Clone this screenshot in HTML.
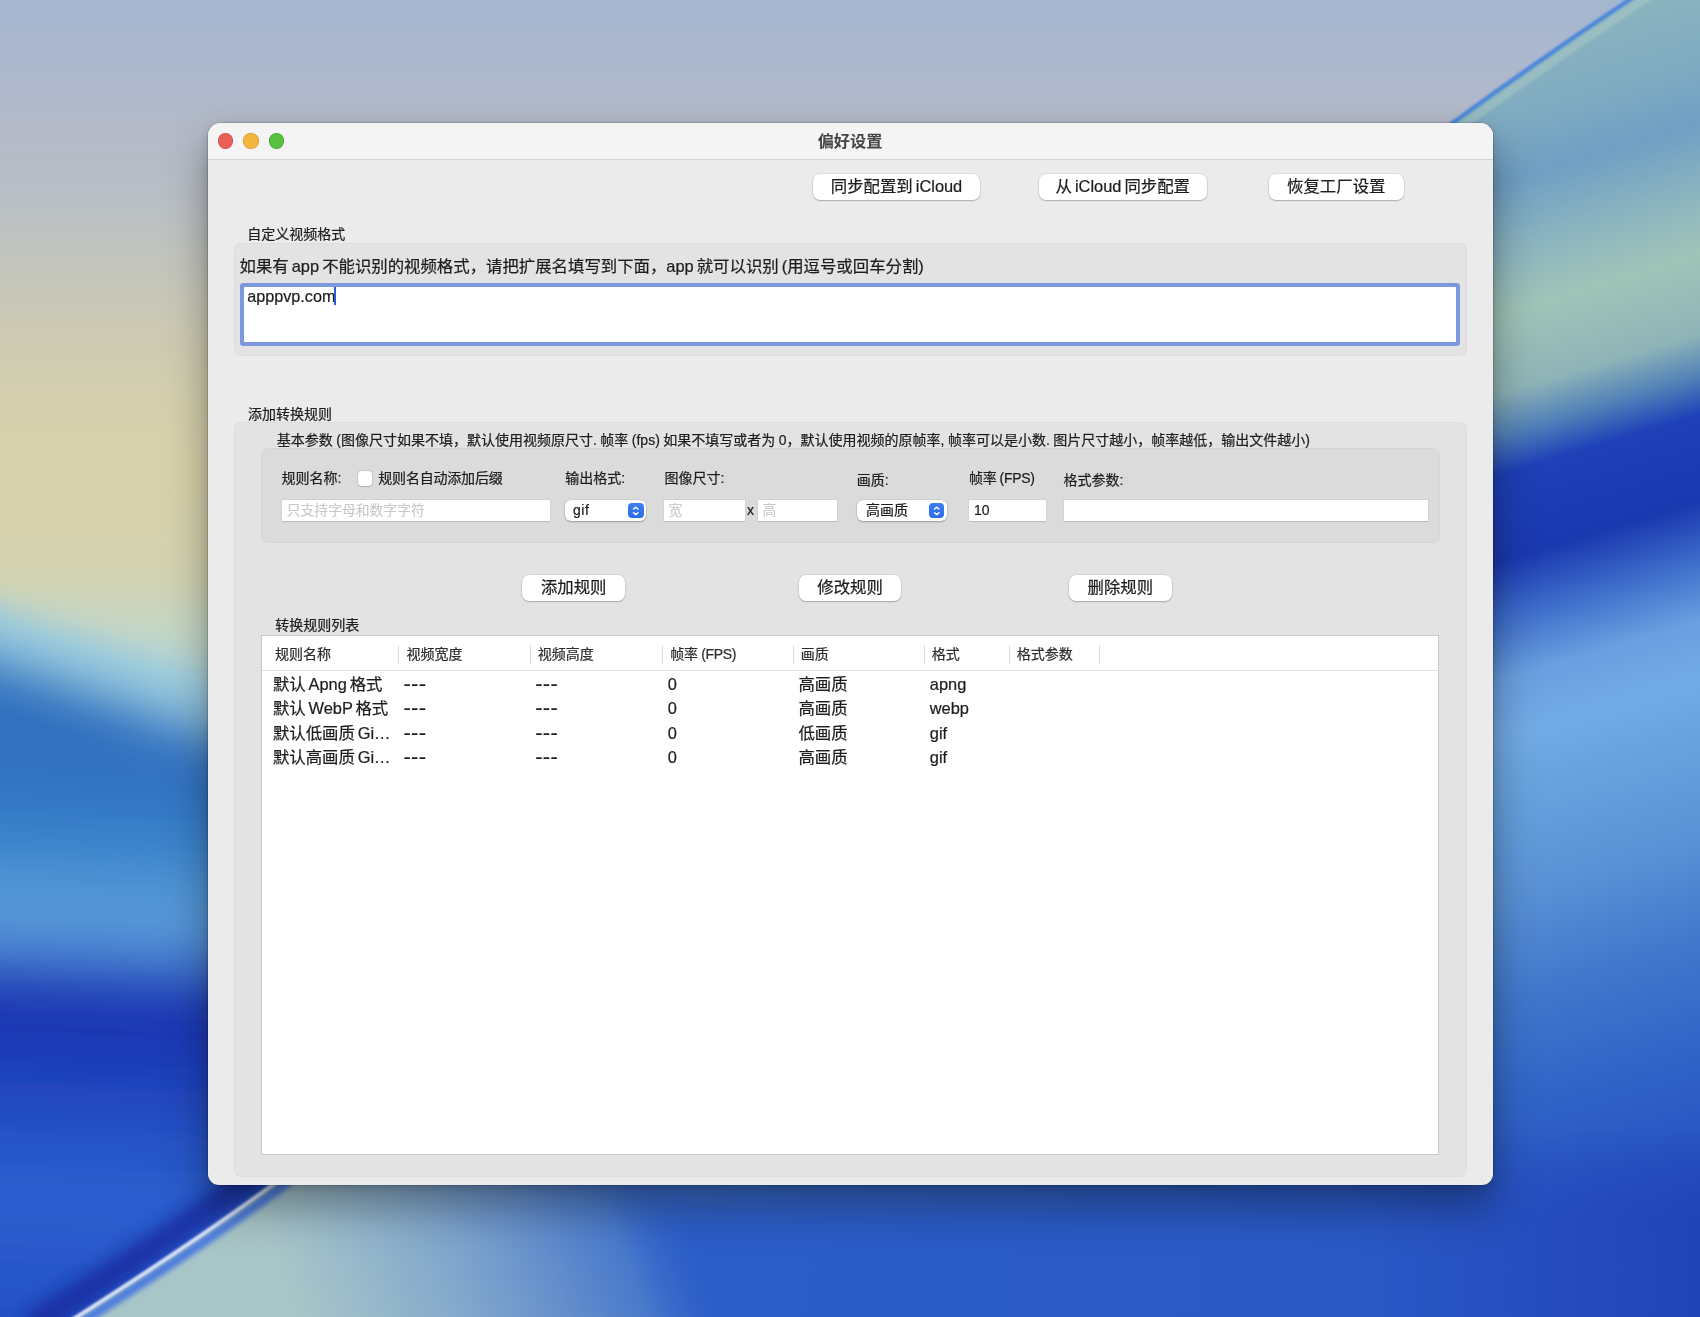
<!DOCTYPE html>
<html lang="zh-CN">
<head>
<meta charset="utf-8">
<title>偏好设置</title>
<style>
html,body{margin:0;padding:0;}
body{width:1700px;height:1317px;overflow:hidden;position:relative;background:#2a5bc8;
  font-family:"Liberation Sans","Noto Sans CJK SC",sans-serif;color:#1d1d1d;-webkit-text-stroke-width:.22px;}
#bg{position:absolute;left:0;top:0;width:1700px;height:1317px;display:block;}
.abs{position:absolute;}
#win{opacity:.9999;position:absolute;left:207.5px;top:123px;width:1285px;height:1062px;border-radius:12.5px 12.5px 11px 11px;background:#ebebeb;
  box-shadow:0 0 0 .6px rgba(0,0,0,.24), 0 22px 42px 2px rgba(0,0,0,.34), 0 3px 11px rgba(0,0,0,.15);overflow:hidden;}
#tbar{position:absolute;left:0;top:0;width:100%;height:36px;background:#f4f4f5;border-bottom:1px solid #d2d2d2;}
.tl{position:absolute;top:10.4px;width:15.6px;height:15.6px;border-radius:50%;box-shadow:inset 0 0 0 .7px rgba(0,0,0,.16);}
#title{position:absolute;left:0;right:0;top:0;height:36px;line-height:36.5px;text-align:center;font-weight:bold;font-size:16.2px;color:#454545;-webkit-text-stroke-width:0;}
.btn{position:absolute;height:26px;line-height:25.4px;word-spacing:-1.5px;background:#fff;border-radius:7px;text-align:center;font-size:16.4px;
  box-shadow:0 0 0 .5px rgba(0,0,0,.12), 0 1px 1.5px rgba(0,0,0,.22);white-space:nowrap;}
.lbl{position:absolute;font-size:14px;line-height:20px;white-space:nowrap;word-spacing:-.4px;}
.big{position:absolute;font-size:16.4px;line-height:24px;white-space:nowrap;word-spacing:-1.5px;}
.box{position:absolute;background:#e3e3e3;border-radius:7px;box-shadow:inset 0 0 0 1px rgba(0,0,0,.025);}
.box2{position:absolute;background:#dbdbdb;border-radius:7px;box-shadow:inset 0 0 0 1px rgba(0,0,0,.025);}
.tf{position:absolute;height:21.2px;background:#fff;box-shadow:0 1px 0 #b9b9b9, 0 0 0 .5px rgba(0,0,0,.08);font-size:14px;line-height:21px;white-space:nowrap;}
.ph{font-size:13.8px;position:relative;top:.5px;color:#c9c9c9;-webkit-text-stroke-width:.12px;}
.pop{position:absolute;height:21.4px;background:#fff;border-radius:6px;box-shadow:0 0 0 .5px rgba(0,0,0,.12), 0 1px 1.5px rgba(0,0,0,.25);font-size:14px;line-height:21.4px;white-space:nowrap;}
.step{position:absolute;right:2.3px;top:2.9px;width:15.5px;height:15.5px;border-radius:4px;background:linear-gradient(#3d80f3,#2a6ce6);}
.step svg{position:absolute;left:0;top:0;}
#tbl{position:absolute;left:54.6px;top:512.8px;width:1176.6px;height:518.4px;background:#fff;box-shadow:0 0 0 1px #c9c9c9;}
.th{position:absolute;top:8.1px;font-size:14px;line-height:20px;color:#2e2e2e;white-space:nowrap;}
.sep{position:absolute;top:9px;width:1px;height:19px;background:#dcdcdc;}
.td{position:absolute;font-size:16.4px;line-height:24px;white-space:nowrap;word-spacing:-1.7px;margin-top:-.8px;}
.ds{font-size:22px;letter-spacing:.3px;margin-left:-.8px;}
</style>
</head>
<body>
<svg id="bg" width="1700" height="1317" viewBox="0 0 1700 1317">
  <defs>
    <linearGradient id="sky" gradientUnits="userSpaceOnUse" x1="0" y1="0" x2="0" y2="1317">
      <stop offset="0" stop-color="#a5b6d0"/>
      <stop offset="0.0456" stop-color="#acb8ce"/>
      <stop offset="0.0987" stop-color="#b4bac8"/>
      <stop offset="0.152" stop-color="#b9bfc5"/>
      <stop offset="0.197" stop-color="#c2c4bd"/>
      <stop offset="0.25" stop-color="#cdcab4"/>
      <stop offset="0.304" stop-color="#d4cfad"/>
      <stop offset="0.357" stop-color="#d8d1aa"/>
      <stop offset="0.402" stop-color="#d6d2ad"/>
      <stop offset="0.44" stop-color="#d2d3b2"/>
      <stop offset="0.475" stop-color="#c6d6c4"/>
      <stop offset="0.52" stop-color="#b0d4d8"/>
    </linearGradient>
    <linearGradient id="lblue" gradientUnits="userSpaceOnUse" x1="0" y1="0" x2="-60" y2="1317">
      <stop offset="0.45" stop-color="#3a80c4"/>
      <stop offset="0.532" stop-color="#2f6fbe"/>
      <stop offset="0.592" stop-color="#3172c2"/>
      <stop offset="0.638" stop-color="#3a84cc"/>
      <stop offset="0.668" stop-color="#4f94d4"/>
      <stop offset="0.695" stop-color="#5c9cd9"/>
      <stop offset="0.718" stop-color="#4a84d4"/>
      <stop offset="0.74" stop-color="#2448bc"/>
      <stop offset="0.763" stop-color="#1a32b0"/>
      <stop offset="0.805" stop-color="#1d3eba"/>
      <stop offset="0.85" stop-color="#2450c4"/>
      <stop offset="0.896" stop-color="#2b5ecf"/>
      <stop offset="0.94" stop-color="#2a5acb"/>
      <stop offset="1" stop-color="#2450c4"/>
    </linearGradient>
    <linearGradient id="rgrad" gradientUnits="userSpaceOnUse" x1="1493" y1="0" x2="1855" y2="1209">
      <stop offset="0" stop-color="#90b8bc"/>
      <stop offset="0.06" stop-color="#86b0c0"/>
      <stop offset="0.099" stop-color="#7eaac2"/>
      <stop offset="0.14" stop-color="#6f9fc4"/>
      <stop offset="0.19" stop-color="#8ab3c0"/>
      <stop offset="0.24" stop-color="#a0c4b8"/>
      <stop offset="0.30" stop-color="#8fb4b8"/>
      <stop offset="0.333" stop-color="#5080b8"/>
      <stop offset="0.362" stop-color="#1e40b8"/>
      <stop offset="0.428" stop-color="#1a38b0"/>
      <stop offset="0.468" stop-color="#3a68c8"/>
      <stop offset="0.518" stop-color="#6a9fe0"/>
      <stop offset="0.562" stop-color="#72abe6"/>
      <stop offset="0.607" stop-color="#68a2de"/>
      <stop offset="0.683" stop-color="#5a92d6"/>
      <stop offset="0.76" stop-color="#4278cc"/>
      <stop offset="0.835" stop-color="#3266c8"/>
      <stop offset="0.9" stop-color="#2a58c4"/>
      <stop offset="1" stop-color="#2040b8"/>
    </linearGradient>
    <linearGradient id="teal" gradientUnits="userSpaceOnUse" x1="300" y1="1317" x2="680" y2="1170">
      <stop offset="0" stop-color="#a8c5c8"/>
      <stop offset="0.2" stop-color="#95b7cb"/>
      <stop offset="0.4" stop-color="#80a6cc"/>
      <stop offset="0.6" stop-color="#6690cc"/>
      <stop offset="0.8" stop-color="#4a7acb" stop-opacity="0.95"/>
      <stop offset="1" stop-color="#2c5ec9" stop-opacity="0"/>
    </linearGradient>
    <linearGradient id="bgrad" gradientUnits="userSpaceOnUse" x1="300" y1="0" x2="1700" y2="0">
      <stop offset="0" stop-color="#2c5ec9"/>
      <stop offset="0.75" stop-color="#2a59c6"/>
      <stop offset="0.9" stop-color="#254cbe"/>
      <stop offset="1" stop-color="#2044b8"/>
    </linearGradient>
    <linearGradient id="bmaskg" gradientUnits="userSpaceOnUse" x1="0" y1="1130" x2="0" y2="1230">
      <stop offset="0" stop-color="#000"/>
      <stop offset="1" stop-color="#fff"/>
    </linearGradient>
    <mask id="bmask" maskUnits="userSpaceOnUse" x="300" y="1120" width="1500" height="300"><rect x="300" y="1120" width="1500" height="300" fill="url(#bmaskg)"/></mask>
    <filter id="b25" x="-20%" y="-20%" width="140%" height="140%"><feGaussianBlur stdDeviation="25"/></filter>
    <filter id="b16" x="-20%" y="-20%" width="140%" height="140%"><feGaussianBlur stdDeviation="16"/></filter>
    <filter id="b6" x="-10%" y="-10%" width="120%" height="120%"><feGaussianBlur stdDeviation="5"/></filter>
    <filter id="b1" x="-5%" y="-5%" width="110%" height="110%"><feGaussianBlur stdDeviation="1"/></filter>
    <filter id="b9" x="-15%" y="-15%" width="130%" height="130%"><feGaussianBlur stdDeviation="8"/></filter>
    <filter id="b3" x="-10%" y="-10%" width="120%" height="120%"><feGaussianBlur stdDeviation="2.5"/></filter>
    <filter id="b2" x="-5%" y="-5%" width="110%" height="110%"><feGaussianBlur stdDeviation="1.2"/></filter>
  </defs>
  <rect width="1700" height="1317" fill="url(#sky)"/>
  <g filter="url(#b16)"><polygon points="-150,556 350,731 350,1450 -150,1450" fill="#9acbdf"/></g>
  <g filter="url(#b25)"><polygon points="-150,610 350,785 350,1450 -150,1450" fill="url(#lblue)"/></g>
  <path d="M1660,-20.5 Q1554.5,48.5 1453,122.5 L1200,330 L330,1140 L275,1183 C200,1238 120,1290 40,1340 L40,1400 L1800,1400 L1800,-18 Z" fill="url(#rgrad)"/>
  <rect x="300" y="1120" width="1500" height="300" fill="url(#bgrad)" mask="url(#bmask)"/>
  <path d="M1660,-20.5 Q1554.5,48.5 1453,122.5 L1380,183" fill="none" stroke="#a8c8c4" stroke-width="9" opacity=".55" transform="translate(5,6)" filter="url(#b2)"/>
  <path d="M1660,-20.5 Q1554.5,48.5 1453,122.5 L1380,183" fill="none" stroke="#4a86dc" stroke-width="4" filter="url(#b2)"/>
  <path d="M40,1340 C120,1290 200,1238 275,1183 L330,1140 L900,1140 L900,1400 L40,1400 Z" fill="url(#teal)"/>
  <path d="M40,1340 C120,1290 200,1238 275,1183 L330,1140" fill="none" stroke="#14289c" stroke-width="26" opacity=".78" filter="url(#b9)" transform="translate(-10,-14)"/>
  <path d="M40,1340 C120,1290 200,1238 275,1183 L330,1140" fill="none" stroke="#3f72e2" stroke-width="9" opacity=".85" filter="url(#b3)" transform="translate(4,6)"/>
  <path d="M40,1340 C120,1290 200,1238 275,1183 L330,1140" fill="none" stroke="#dde6f7" stroke-width="3.8" filter="url(#b1)"/>
</svg>
<div id="win">
  <div id="tbar">
    <div class="tl" style="left:10px;background:#ec5f57;"></div>
    <div class="tl" style="left:35.5px;background:#f5b63d;"></div>
    <div class="tl" style="left:61px;background:#56c13d;"></div>
    <div id="title">偏好设置</div>
  </div>
  <div id="in" style="position:absolute;left:-.5px;top:0;width:1286px;height:1062px;">

  <div class="btn" style="left:606px;top:51px;width:167px;">同步配置到 iCloud</div>
  <div class="btn" style="left:832px;top:51px;width:167.5px;">从 iCloud 同步配置</div>
  <div class="btn" style="left:1061.5px;top:51px;width:135.5px;">恢复工厂设置</div>

  <div class="lbl" style="left:40.2px;top:101px;">自定义视频格式</div>
  <div class="box" style="left:26.5px;top:120px;width:1233px;height:112.5px;"></div>
  <div class="big" style="left:32.5px;top:130.5px;">如果有 app 不能识别的视频格式，请把扩展名填写到下面，app 就可以识别 (用逗号或回车分割)</div>
  <div id="ta" class="abs" style="left:36.5px;top:163.5px;width:1212px;height:55.5px;background:#fff;box-shadow:0 0 0 4px #7c99dd;border-radius:1px;">
    <div class="abs" style="left:3.7px;top:-.8px;font-size:16.2px;line-height:20px;">apppvp.com</div>
    <div class="abs" style="left:90.8px;top:0px;width:2px;height:18px;background:#2b5fd1;"></div>
  </div>

  <div class="lbl" style="left:41px;top:281px;">添加转换规则</div>
  <div class="box" style="left:26.5px;top:298.5px;width:1233px;height:755px;"></div>
  <div class="lbl" style="left:69.8px;top:307.3px;">基本参数 (图像尺寸如果不填，默认使用视频原尺寸. 帧率 (fps) 如果不填写或者为 0，默认使用视频的原帧率, 帧率可以是小数. 图片尺寸越小，帧率越低，输出文件越小)</div>
  <div class="box2" style="left:54px;top:325.2px;width:1179px;height:95px;"></div>

  <div class="lbl" style="left:74.5px;top:345px;">规则名称:</div>
  <div class="abs" style="left:150.9px;top:348.1px;width:14.2px;height:14.5px;border-radius:3.5px;background:#fff;box-shadow:0 0 0 .5px rgba(0,0,0,.14), 0 .5px 1px rgba(0,0,0,.14);"></div>
  <div class="lbl" style="left:171.3px;top:345px;letter-spacing:-.2px;">规则名自动添加后缀</div>
  <div class="lbl" style="left:358.2px;top:345px;">输出格式:</div>
  <div class="lbl" style="left:457.5px;top:345px;">图像尺寸:</div>
  <div class="lbl" style="left:649.8px;top:346.5px;">画质:</div>
  <div class="lbl" style="left:762px;top:345px;letter-spacing:-.3px;">帧率 (FPS)</div>
  <div class="lbl" style="left:856.5px;top:346.5px;">格式参数:</div>

  <div class="tf" style="left:75.4px;top:376.5px;width:267.9px;"><span class="ph" style="margin-left:4.4px;">只支持字母和数字字符</span></div>
  <div class="pop" style="left:357.7px;top:376.7px;width:81.6px;"><span style="margin-left:8.2px;letter-spacing:.6px;">gif</span><div class="step"><svg width="15.5" height="15.5" viewBox="0 0 15.5 15.5"><path d="M5.55 6.05 L7.75 4.2 L9.95 6.05 M5.55 9.75 L7.75 11.6 L9.95 9.75" fill="none" stroke="#fff" stroke-width="1.45" stroke-linecap="round" stroke-linejoin="round"/></svg></div></div>
  <div class="tf" style="left:457px;top:376.5px;width:80.5px;"><span class="ph" style="margin-left:4.6px;">宽</span></div>
  <div class="lbl" style="left:540px;top:377px;">x</div>
  <div class="tf" style="left:551px;top:376.5px;width:79px;"><span class="ph" style="margin-left:4.6px;">高</span></div>
  <div class="pop" style="left:650.4px;top:376.7px;width:89.2px;"><span style="margin-left:8.5px;">高画质</span><div class="step"><svg width="15.5" height="15.5" viewBox="0 0 15.5 15.5"><path d="M5.55 6.05 L7.75 4.2 L9.95 6.05 M5.55 9.75 L7.75 11.6 L9.95 9.75" fill="none" stroke="#fff" stroke-width="1.45" stroke-linecap="round" stroke-linejoin="round"/></svg></div></div>
  <div class="tf" style="left:762.2px;top:376.5px;width:76.8px;"><span style="margin-left:4.8px;">10</span></div>
  <div class="tf" style="left:857.4px;top:376.5px;width:363.7px;"></div>

  <div class="btn" style="left:315.3px;top:452px;width:102.8px;">添加规则</div>
  <div class="btn" style="left:592px;top:452px;width:102.2px;">修改规则</div>
  <div class="btn" style="left:862px;top:452px;width:102.7px;">删除规则</div>

  <div class="lbl" style="left:68.3px;top:492px;">转换规则列表</div>
  <div id="tbl">
    <div class="abs" style="left:0;top:34.6px;width:100%;height:1px;background:#dedede;"></div>
    <div class="th" style="left:13.5px;">规则名称</div>
    <div class="th" style="left:144.8px;">视频宽度</div>
    <div class="th" style="left:276.1px;">视频高度</div>
    <div class="th" style="left:408.6px;letter-spacing:-.3px;">帧率 (FPS)</div>
    <div class="th" style="left:539.2px;">画质</div>
    <div class="th" style="left:670.2px;">格式</div>
    <div class="th" style="left:755.2px;">格式参数</div>
    <div class="sep" style="left:136.7px;"></div>
    <div class="sep" style="left:268.2px;"></div>
    <div class="sep" style="left:400.2px;"></div>
    <div class="sep" style="left:531.2px;"></div>
    <div class="sep" style="left:662.2px;"></div>
    <div class="sep" style="left:747.2px;"></div>
    <div class="sep" style="left:837.7px;"></div>
    <div class="td" style="left:11.3px;top:37.3px;">默认 Apng 格式</div><div class="td ds" style="left:142.6px;top:37.3px;">---</div><div class="td ds" style="left:274.4px;top:37.3px;">---</div><div class="td" style="left:406.1px;top:37.3px;">0</div><div class="td" style="left:536.9px;top:37.3px;">高画质</div><div class="td" style="left:668.2px;top:37.3px;">apng</div>
    <div class="td" style="left:11.3px;top:61.4px;">默认 WebP 格式</div><div class="td ds" style="left:142.6px;top:61.4px;">---</div><div class="td ds" style="left:274.4px;top:61.4px;">---</div><div class="td" style="left:406.1px;top:61.4px;">0</div><div class="td" style="left:536.9px;top:61.4px;">高画质</div><div class="td" style="left:668.2px;top:61.4px;">webp</div>
    <div class="td" style="left:11.3px;top:85.5px;">默认低画质 Gi…</div><div class="td ds" style="left:142.6px;top:85.5px;">---</div><div class="td ds" style="left:274.4px;top:85.5px;">---</div><div class="td" style="left:406.1px;top:85.5px;">0</div><div class="td" style="left:536.9px;top:85.5px;">低画质</div><div class="td" style="left:668.2px;top:85.5px;">gif</div>
    <div class="td" style="left:11.3px;top:109.8px;">默认高画质 Gi…</div><div class="td ds" style="left:142.6px;top:109.8px;">---</div><div class="td ds" style="left:274.4px;top:109.8px;">---</div><div class="td" style="left:406.1px;top:109.8px;">0</div><div class="td" style="left:536.9px;top:109.8px;">高画质</div><div class="td" style="left:668.2px;top:109.8px;">gif</div>
  </div>
</div>
</div>
</body>
</html>
